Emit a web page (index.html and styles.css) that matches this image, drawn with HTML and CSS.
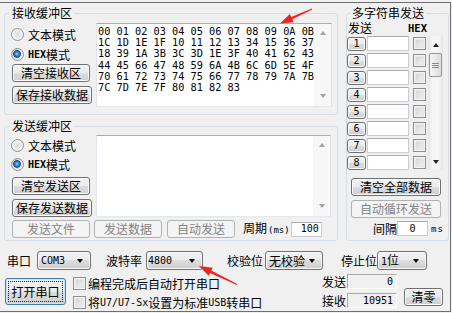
FILE: index.html
```html
<!DOCTYPE html>
<html lang="zh-CN">
<head>
    <meta charset="UTF-8" />
    <title>串口调试</title>
    <link rel="stylesheet" href="styles.css">
</head>
<body>
<div class="window">
    <div class="main">
        <div class="left">
            <fieldset class="group recv">
                <legend>接收缓冲区</legend>
                <div class="pane">
                    <div class="opts">
                        <label class="radio"><i></i>文本模式</label>
                        <label class="radio on"><i></i><span class="en b">HEX</span>模式</label>
                        <button class="btn w78">清空接收区</button>
                        <button class="btn w80">保存接收数据</button>
                    </div>
                    <div class="edit hex">
<div class="text">00 01 02 03 04 05 06 07 08 09 0A 0B
1C 1D 1E 1F 10 11 12 13 34 15 36 37
18 39 1A 3B 3C 3D 1E 3F 40 41 62 43
44 45 66 47 48 59 6A 4B 6C 6D 5E 4F
70 61 72 73 74 75 66 77 78 79 7A 7B
7C 7D 7E 7F 80 81 82 83</div>
                        <div class="vscroll"><i class="up"></i><i class="down"></i></div>
                    </div>
                </div>
            </fieldset>
            <fieldset class="group send">
                <legend>发送缓冲区</legend>
                <div class="pane">
                    <div class="opts">
                        <label class="radio"><i></i>文本模式</label>
                        <label class="radio on"><i></i><span class="en b">HEX</span>模式</label>
                        <button class="btn w78">清空发送区</button>
                        <button class="btn w80">保存发送数据</button>
                    </div>
                    <div class="edit sendbox">
                        <div class="text"></div>
                        <div class="vscroll"><i class="up"></i><i class="down"></i></div>
                    </div>
                </div>
                <div class="sendbar">
                    <button class="btn off w78">发送文件</button>
                    <button class="btn off w68 sp4">发送数据</button>
                    <button class="btn off w68 sp5">自动发送</button>
                    <span class="period">周期<span class="small">(ms)</span></span>
                    <div class="field w31 right"><span class="en">100</span></div>
                </div>
            </fieldset>
        </div>

        <fieldset class="group multi">
            <legend>多字符串发送</legend>
            <div class="mhead"><span>发送</span><span class="en b">HEX</span></div>
            <div class="strlist">
                <div class="rows">
                    <div class="row"><button class="btn num"><span class="en">1</span></button><div class="field"></div><i class="box"></i></div>
                    <div class="row"><button class="btn num"><span class="en">2</span></button><div class="field"></div><i class="box"></i></div>
                    <div class="row"><button class="btn num"><span class="en">3</span></button><div class="field"></div><i class="box"></i></div>
                    <div class="row"><button class="btn num"><span class="en">4</span></button><div class="field"></div><i class="box"></i></div>
                    <div class="row"><button class="btn num"><span class="en">5</span></button><div class="field"></div><i class="box"></i></div>
                    <div class="row"><button class="btn num"><span class="en">6</span></button><div class="field"></div><i class="box"></i></div>
                    <div class="row"><button class="btn num"><span class="en">7</span></button><div class="field"></div><i class="box"></i></div>
                    <div class="row"><button class="btn num"><span class="en">8</span></button><div class="field"></div><i class="box"></i></div>
                </div>
                <div class="sb">
                    <div class="cap"><i class="up"></i></div>
                    <div class="thumb"></div>
                    <div class="track"></div>
                    <div class="cap"><i class="down"></i></div>
                </div>
            </div>
            <button class="btn w90 clear-all">清空全部数据</button>
            <button class="btn off w90 loop">自动循环发送</button>
            <div class="interval">
                <span>间隔</span>
                <div class="field w31 center"><span class="en">0</span></div>
                <span class="small ms">ms</span>
            </div>
        </fieldset>
    </div>

    <div class="ports">
        <span>串口</span>
        <div class="combo com"><span class="en">COM3</span><i class="arr"></i></div>
        <span class="baud-l">波特率</span>
        <div class="combo baud"><span class="en">4800</span><i class="arr"></i></div>
        <span class="parity-l">校验位</span>
        <div class="combo parity"><span>无校验</span><i class="arr"></i></div>
        <span class="stop-l">停止位</span>
        <div class="combo stop"><span><span class="en">1</span>位</span><i class="arr"></i></div>
    </div>

    <div class="ctrl">
        <button class="btn open">打开串口</button>
        <div class="checks">
            <label class="chk"><i class="box"></i>编程完成后自动打开串口</label>
            <label class="chk"><i class="box"></i>将<span class="en">U7/U7-Sx</span>设置为标准<span class="en">USB</span>转串口</label>
        </div>
        <div class="stats">
            <div>
                <div class="stat"><span class="lbl">发送</span><div class="ro"><span class="en">0</span></div></div>
                <div class="stat"><span class="lbl">接收</span><div class="ro"><span class="en">10951</span></div></div>
            </div>
            <button class="btn zero">清零</button>
        </div>
    </div>
</div>

<svg class="marks" width="452" height="313" viewBox="0 0 452 313">
    <polygon points="280,23.5 293.7,22.2 292.3,19.3 312.2,9.5 311.8,8.5 291.3,16.9 289.9,14" />
    <polygon points="199,266 212.7,267.7 211.3,270.5 237.2,284.1 236.8,284.9 210.1,272.9 208.7,275.7" />
</svg>
</body>
</html>
```

FILE: styles.css
```css
* {margin:0; padding:0; box-sizing:border-box;}
body {
    background: #f0f0f0;
    color: #000;
    font: 12px/12px "Noto Sans CJK SC", sans-serif;
}
.en {
    font-family: "DejaVu Sans Mono", monospace;
    font-size: 10px;
}
.b { font-weight: bold; }
.small {
    font-family: "DejaVu Sans Mono", monospace;
    font-size: 9px;
}

.window {
    position: relative;
    width: 451px;
    height: 310px;
    margin-top: 2px;
    border: 1px solid #6e6e6e;
    border-left: 0;
}
.main {
    display: flex;
    margin-top: 4px;
}
.left {
    width: 334px;
    margin-left: 4px;
}

/* group boxes */
.group {
    border: 1px solid #d5dfe5;
    border-radius: 3px;
    min-width: 0;
}
.group legend {
    margin-left: 5px;
    padding: 0 2px;
    height: 12px;
    line-height: 11px;
}
.recv { padding-bottom: 7px; }
.send { margin-top: 5px; padding-bottom: 2px; }
.multi {
    width: 103px;
    margin-left: 8px;
    padding-bottom: 4px;
}
.multi legend { margin-left: 3px; }

.pane { display: flex; }
.opts {
    display: flex;
    flex-direction: column;
    align-items: flex-start;
    width: 91px;
    padding-left: 6px;
}
.opts .btn { margin-left: 1px; }
.recv .opts { padding-top: 9px; }
.recv .opts .radio + .radio { margin-top: 7px; }
.recv .opts .radio + .btn { margin-top: 3px; }
.recv .opts .btn + .btn { margin-top: 4px; }
.send .opts { padding-top: 7px; }
.send .opts .radio + .radio { margin-top: 6px; }
.send .opts .radio + .btn { margin-top: 6px; }
.send .opts .btn + .btn { margin-top: 4px; }

/* radio / checkbox */
.radio, .chk {
    display: flex;
    align-items: center;
    height: 13px;
    white-space: nowrap;
}
.radio i {
    width: 13px;
    height: 13px;
    margin-right: 4px;
    border: 1px solid #8e8f8f;
    border-radius: 50%;
    background: radial-gradient(circle, #d8d8d8 0, #e8e8e8 3px, #fafafa 6px);
}
.radio.on i {
    background: radial-gradient(circle at 45% 45%, #8fd8ff 0, #2b86cc 2px, #1a4f86 3.5px, #d6d6d6 4.2px, #f6f6f6 6px);
}
.box {
    display: block;
    width: 13px;
    height: 13px;
    border: 1px solid #8e8f8f;
    background: linear-gradient(135deg, #cbcfd5, #f6f6f6);
    box-shadow: inset 0 0 0 1px #f4f4f4, inset 0 0 0 2px #e6e6e6;
}
.chk .box { margin-right: 2px; }

/* buttons */
.btn {
    display: flex;
    align-items: center;
    justify-content: center;
    height: 18px;
    font: inherit;
    color: #000;
    border: 1px solid #707070;
    border-radius: 3px;
    background: linear-gradient(#f2f2f2 0, #ebebeb 50%, #dddddd 50%, #cfcfcf 100%);
    box-shadow: inset 0 0 0 1px #fbfbfb;
}
.btn.off {
    color: #838383;
    border-color: #adb2b5;
    background: #f4f4f4;
    box-shadow: none;
}
.w68 { width: 68px; }
.w78 { width: 78px; }
.w80 { width: 80px; }
.w90 { width: 90px; }
.sp4 { margin-left: 4px; }
.sp5 { margin-left: 5px; }

/* edit boxes */
.edit {
    display: flex;
    background: #fff;
    border: 1px solid #abadb3;
    border-color: #abadb3 #dbdfe6 #e3e9ef #e2e3ea;
}
.hex {
    width: 236px;
    height: 84px;
    margin-top: 4px;
}
.sendbox {
    width: 235px;
    height: 82px;
    margin-top: 3px;
}
.edit .text {
    flex: 1;
    padding: 2px 0 0 1px;
    font: 10.25px/11.2px "DejaVu Sans Mono", monospace;
    white-space: pre;
}
.vscroll {
    width: 17px;
    display: flex;
    flex-direction: column;
    justify-content: space-between;
    align-items: center;
    padding: 7px 0 8px;
    background: #f7f7f7;
}
.up, .down {
    display: block;
    width: 0;
    height: 0;
    border-left: 3.5px solid transparent;
    border-right: 3.5px solid transparent;
}
.up { border-bottom: 4px solid #a3a3a3; }
.down { border-top: 4px solid #a3a3a3; }

.field {
    display: flex;
    align-items: center;
    height: 15px;
    background: #fff;
    border: 1px solid #c9ccd2;
    border-top-color: #abadb3;
}
.w31 { width: 31px; }
.right { justify-content: flex-end; padding-right: 2px; }
.center { justify-content: center; }

.sendbar {
    display: flex;
    align-items: center;
    margin-top: 3px;
    padding-left: 7px;
}
.period {
    margin-left: 8px;
    white-space: nowrap;
}
.period .small { margin-left: 1px; }
.sendbar .field { margin-left: 1px; }

/* multi string */
.mhead {
    display: flex;
    justify-content: space-between;
    width: 81px;
    margin-top: 3px;
    padding: 0 1px;
}
.mhead .en { font-size: 10.5px; }
.strlist {
    display: flex;
    margin-top: 2px;
}
.rows {
    display: flex;
    flex-direction: column;
    gap: 2px;
}
.row {
    display: flex;
    align-items: center;
    height: 15px;
}
.num {
    width: 19px;
    height: 14px;
}
.row .field {
    width: 42px;
    margin-left: 1px;
}
.row .box { margin-left: 4px; }
.sb {
    display: flex;
    flex-direction: column;
    align-items: center;
    width: 15px;
    height: 134px;
    margin-left: 2px;
    background: linear-gradient(90deg, #e4e4e4, #f5f5f5 30%, #f5f5f5 70%, #e4e4e4);
}
.sb .cap {
    display: flex;
    align-items: center;
    justify-content: center;
    height: 17px;
}
.sb .up { border-bottom-color: #222; }
.sb .down { border-top-color: #222; }
.thumb {
    width: 13px;
    height: 24px;
    border: 1px solid #979797;
    border-radius: 2px;
    background: repeating-linear-gradient(#8a8a8a 0 1px, transparent 1px 2px) center / 7px 5px no-repeat,
                linear-gradient(90deg, #f6f6f6, #dcdcdc);
}
.track { flex: 1; }
.clear-all { margin: 8px 0 0 4px; }
.loop { margin: 4px 0 0 4px; }
.interval {
    display: flex;
    align-items: center;
    margin-top: 3px;
    padding-left: 26px;
}
.ms {
    margin-left: 3px;
    letter-spacing: 1px;
}

/* port settings */
.ports {
    display: flex;
    align-items: center;
    height: 19px;
    margin-top: 10px;
    padding-left: 7px;
    white-space: nowrap;
}
.combo {
    display: flex;
    align-items: center;
    height: 19px;
    margin-left: 6px;
    padding: 0 7px 0 3px;
    border: 1px solid #707070;
    border-radius: 3px;
    background: linear-gradient(#f2f2f2 0, #ebebeb 50%, #dddddd 50%, #cfcfcf 100%);
    box-shadow: inset 0 0 0 1px #fbfbfb;
}
.arr {
    width: 0;
    height: 0;
    margin-left: auto;
    border-left: 3.5px solid transparent;
    border-right: 3.5px solid transparent;
    border-top: 4px solid #000;
}
.com { width: 54px; }
.baud-l { margin-left: 15px; }
.baud { width: 57px; margin-left: 4px; padding-left: 1px; }
.parity-l { margin-left: 24px; }
.parity { width: 58px; margin-left: 2px; }
.stop-l { margin-left: 18px; }
.stop { width: 50px; margin-left: 0; }

/* bottom controls */
.ctrl {
    display: flex;
    align-items: flex-start;
    margin-top: 4px;
}
.open {
    width: 61px;
    height: 27px;
    margin: 4px 0 0 5px;
    border-color: #3c7fb1;
    box-shadow: inset 0 0 0 1px #c4e5f6;
    outline: 1px dotted #222;
    outline-offset: -4px;
}
.checks {
    margin-left: 7px;
    padding-top: 3px;
}
.chk + .chk { margin-top: 6px; }
.stats {
    display: flex;
    margin-left: auto;
    margin-right: 7px;
}
.stat {
    display: flex;
    align-items: center;
    height: 15px;
}
.stat + .stat { margin-top: 4px; }
.lbl { width: 24px; }
.ro {
    display: flex;
    align-items: center;
    justify-content: flex-end;
    width: 50px;
    height: 15px;
    margin-left: 1px;
    padding-right: 3px;
    border: 1px solid #fff;
    border-color: #a9a9a9 #fff #fff #a9a9a9;
}
.zero {
    width: 39px;
    margin: 14px 0 0 7px;
}

.marks {
    position: absolute;
    left: 0;
    top: 0;
    pointer-events: none;
}
.marks polygon { fill: #e8251e; }
```
